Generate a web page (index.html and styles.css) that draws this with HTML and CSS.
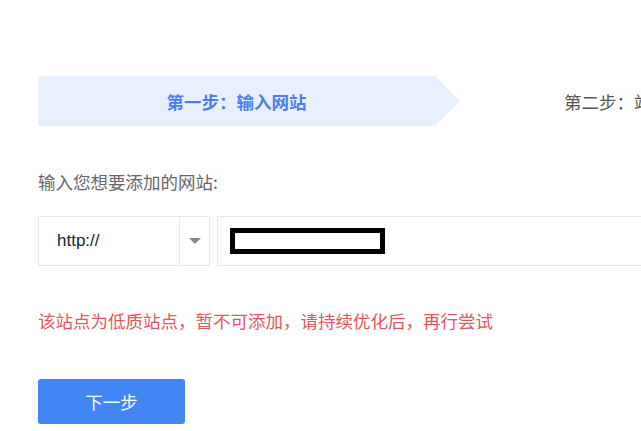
FILE: index.html
```html
<!DOCTYPE html>
<html lang="zh-CN">
<head>
    <meta charset="UTF-8">
    <meta name="viewport" content="width=device-width, initial-scale=1.0">
    <title>添加网站</title>
    <link rel="stylesheet" href="styles.css">
</head>
<body>
    <div class="page">
        <div class="steps">
            <div class="step active">第一步：输入网站</div>
            <div class="step">第二步：站点验证</div>
        </div>

        <div class="form-label">输入您想要添加的网站:</div>

        <div class="url-row">
            <div class="protocol-select">
                <span class="protocol-value">http://</span>
                <span class="select-arrow"></span>
            </div>
            <div class="url-input">
                <span class="masked"></span>
            </div>
        </div>

        <div class="error-msg">该站点为低质站点，暂不可添加，请持续优化后，再行尝试</div>

        <button class="btn-next">下一步</button>
    </div>
</body>
</html>
```

FILE: styles.css
```css
html, body {
    margin: 0;
    padding: 0;
    overflow: hidden;
    background: #fff;
}

body {
    font-family: "Noto Sans CJK SC", "Liberation Sans", sans-serif;
    font-size: 17.5px;
    color: #333;
}

.page {
    padding: 76px 0 0 38px;
    width: 900px;
}

/* step indicator */
.steps {
    display: flex;
    height: 50px;
}

.step {
    display: flex;
    align-items: center;
    white-space: nowrap;
    color: #555;
    padding-left: 104px;
}

.step.active {
    width: 422px;
    box-sizing: border-box;
    padding: 0 25px 0 0;
    justify-content: center;
    background: #e8f0fd;
    color: #4b80ec;
    font-weight: bold;
    clip-path: polygon(0 0, calc(100% - 25px) 0, 100% 50%, calc(100% - 25px) 100%, 0 100%);
}

.form-label {
    margin-top: 43px;
    line-height: 26px;
    color: #666;
}

/* url row */
.url-row {
    display: flex;
    gap: 7px;
    margin-top: 21px;
    height: 50px;
}

.protocol-select {
    width: 172px;
    box-sizing: border-box;
    border: 1px solid #e6e6e6;
    display: flex;
    align-items: center;
}

.protocol-value {
    flex: 1;
    padding-left: 18px;
    font-family: "Liberation Sans", Arial, sans-serif;
    font-size: 17px;
    color: #222;
}

.select-arrow {
    width: 29px;
    height: 100%;
    border-left: 1px solid #e6e6e6;
    display: flex;
    align-items: center;
    justify-content: center;
}

.select-arrow::after {
    content: "";
    border-left: 6px solid transparent;
    border-right: 6px solid transparent;
    border-top: 6px solid #888;
}

.url-input {
    width: 500px;
    box-sizing: border-box;
    border: 1px solid #e6e6e6;
    display: flex;
    align-items: center;
    padding-left: 12px;
}

.masked {
    width: 155px;
    height: 26px;
    box-sizing: border-box;
    border: 5px solid #000;
    background: #fff;
}

.error-msg {
    margin-top: 42px;
    line-height: 26px;
    color: #e3565b;
}

.btn-next {
    margin-top: 45px;
    width: 147px;
    height: 45px;
    border: none;
    border-radius: 3px;
    background: #4285f4;
    color: #fff;
    font-family: "Noto Sans CJK SC", sans-serif;
    font-size: 17.5px;
    cursor: pointer;
}
```
